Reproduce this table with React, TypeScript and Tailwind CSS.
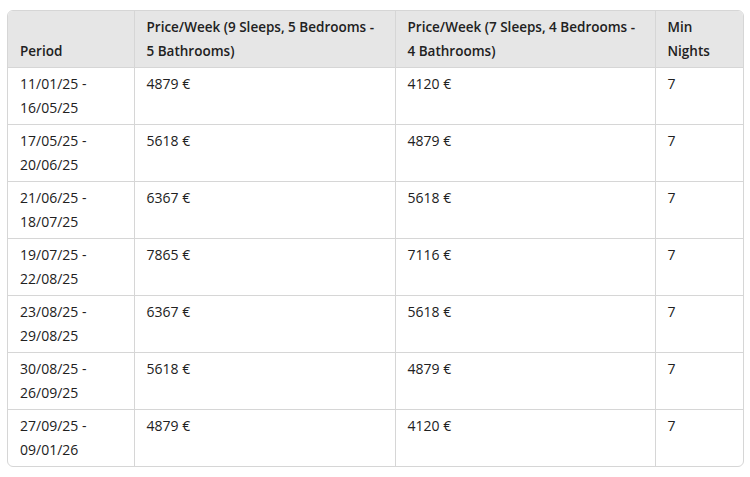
import React from "react";

const rows: [string, string, string, string, string][] = [
  ["11/01/25 -", "16/05/25", "4879 €", "4120 €", "7"],
  ["17/05/25 -", "20/06/25", "5618 €", "4879 €", "7"],
  ["21/06/25 -", "18/07/25", "6367 €", "5618 €", "7"],
  ["19/07/25 -", "22/08/25", "7865 €", "7116 €", "7"],
  ["23/08/25 -", "29/08/25", "6367 €", "5618 €", "7"],
  ["30/08/25 -", "26/09/25", "5618 €", "4879 €", "7"],
  ["27/09/25 -", "09/01/26", "4879 €", "4120 €", "7"],
];

export default function App() {
  return (
    <div className="w-[750px] h-[477px] bg-white pt-[10px] pl-[7px]" style={{ fontFamily: '"Open Sans", sans-serif' }}>
      <div className="w-[737px] border border-[#d6d6d6] rounded-[6px] overflow-hidden text-[14px] leading-[24px] text-[#212121]">
        <table className="w-full border-collapse table-fixed">
          <colgroup>
            <col className="w-[126px]" />
            <col className="w-[261px]" />
            <col className="w-[260px]" />
            <col />
          </colgroup>
          <thead>
            <tr className="bg-[#e6e6e6] text-[13.5px]">
              <th className="font-semibold text-left align-bottom px-[12px] py-[4px] border-r border-b border-[#d6d6d6]">Period</th>
              <th className="font-semibold text-left align-bottom px-[12px] py-[4px] border-r border-b border-[#d6d6d6] whitespace-nowrap">
                Price/Week (9 Sleeps, 5 Bedrooms -<br />5 Bathrooms)
              </th>
              <th className="font-semibold text-left align-bottom px-[12px] py-[4px] border-r border-b border-[#d6d6d6] whitespace-nowrap">
                Price/Week (7 Sleeps, 4 Bedrooms -<br />4 Bathrooms)
              </th>
              <th className="font-semibold text-left align-bottom px-[12px] py-[4px] border-b border-[#d6d6d6]">
                Min<br />Nights
              </th>
            </tr>
          </thead>
          <tbody>
            {rows.map((r, i) => {
              const last = i === rows.length - 1;
              return (
                <tr key={i}>
                  <td className={`align-top px-[12px] py-[4px] border-r border-[#d6d6d6] whitespace-nowrap ${last ? "" : "border-b"}`}>
                    {r[0]}
                    <br />
                    {r[1]}
                  </td>
                  <td className={`align-top px-[12px] py-[4px] border-r border-[#d6d6d6] ${last ? "" : "border-b"}`}>{r[2]}</td>
                  <td className={`align-top px-[12px] py-[4px] border-r border-[#d6d6d6] ${last ? "" : "border-b"}`}>{r[3]}</td>
                  <td className={`align-top px-[12px] py-[4px] border-[#d6d6d6] ${last ? "" : "border-b"}`}>{r[4]}</td>
                </tr>
              );
            })}
          </tbody>
        </table>
      </div>
    </div>
  );
}
